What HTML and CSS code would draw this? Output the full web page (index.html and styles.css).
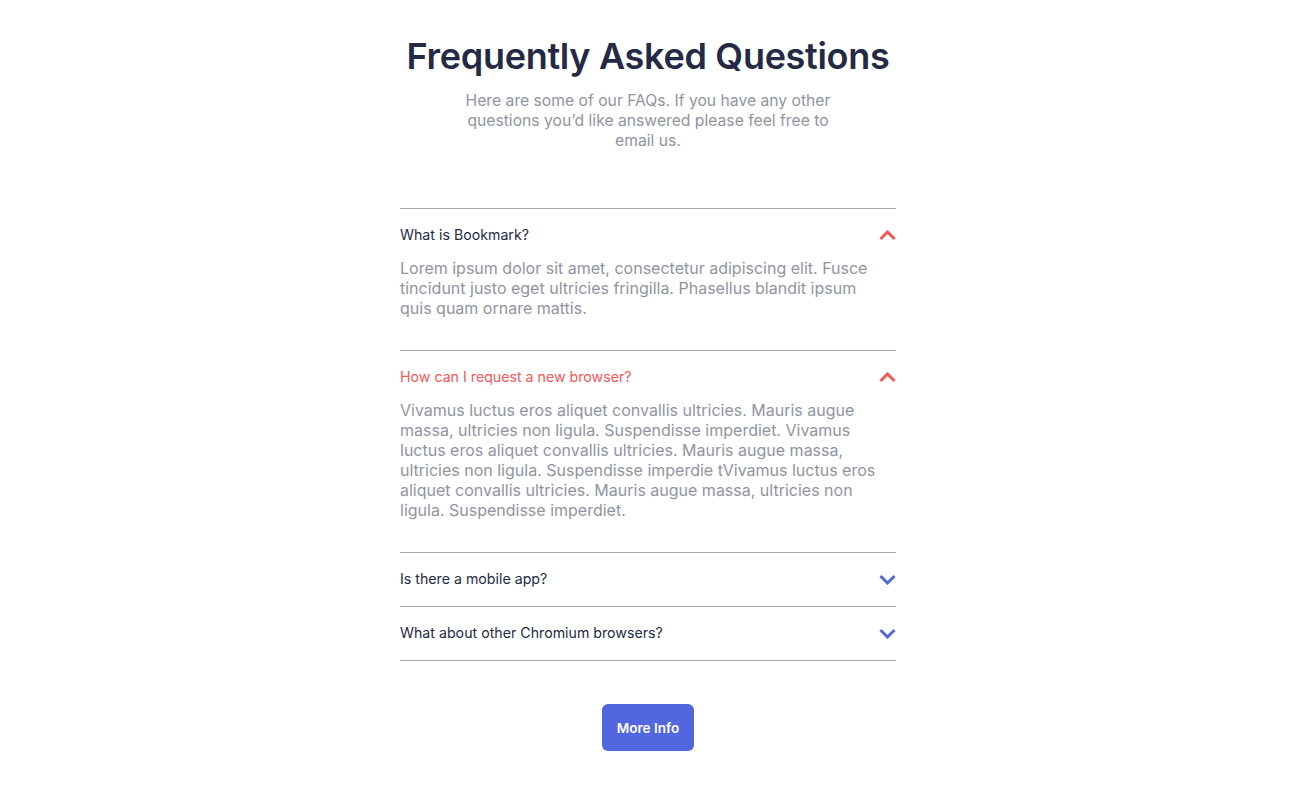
FILE: index.html
```html
<!DOCTYPE html>
<html lang="en">
<head>
<meta charset="utf-8">
<title>FAQ</title>
<link rel="stylesheet" href="styles.css">
</head>
<body>
<main class="faq">
  <h1 class="faq-title">Frequently Asked Questions</h1>
  <p class="faq-intro">Here are some of our FAQs. If you have any other questions you’d like answered please feel free to email us.</p>
  <div class="faq-list">
    <div class="faq-item open">
      <div class="faq-q"><span>What is Bookmark?</span>
        <svg class="chev up" width="17" height="11" viewBox="0 0 17 11"><path d="M1.5 9 L8.5 2 L15.5 9"/></svg>
      </div>
      <p class="faq-a">Lorem ipsum dolor sit amet, consectetur adipiscing elit. Fusce tincidunt justo eget ultricies fringilla. Phasellus blandit ipsum quis quam ornare mattis.</p>
    </div>
    <div class="faq-item open active">
      <div class="faq-q"><span>How can I request a new browser?</span>
        <svg class="chev up" width="17" height="11" viewBox="0 0 17 11"><path d="M1.5 9 L8.5 2 L15.5 9"/></svg>
      </div>
      <p class="faq-a">Vivamus luctus eros aliquet convallis ultricies. Mauris augue massa, ultricies non ligula. Suspendisse imperdiet. Vivamus luctus eros aliquet convallis ultricies. Mauris augue massa, ultricies non ligula. Suspendisse imperdie tVivamus luctus eros aliquet convallis ultricies. Mauris augue massa, ultricies non ligula. Suspendisse imperdiet.</p>
    </div>
    <div class="faq-item">
      <div class="faq-q"><span>Is there a mobile app?</span>
        <svg class="chev down" width="17" height="11" viewBox="0 0 17 11"><path d="M1.5 2 L8.5 9 L15.5 2"/></svg>
      </div>
    </div>
    <div class="faq-item">
      <div class="faq-q"><span>What about other Chromium browsers?</span>
        <svg class="chev down" width="17" height="11" viewBox="0 0 17 11"><path d="M1.5 2 L8.5 9 L15.5 2"/></svg>
      </div>
    </div>
  </div>
  <button class="more-btn" type="button">More Info</button>
</main>
</body>
</html>
```

FILE: styles.css
```css
* { box-sizing: border-box; }
html, body { margin: 0; padding: 0; background: #fff; }
body {
  font-family: Inter, "Open Sans", "Liberation Sans", sans-serif;
  color: #242a45;
}
.faq {
  display: flex;
  flex-direction: column;
  align-items: center;
  padding-top: 34px;
}
.faq-title {
  margin: 0;
  font-size: 36px;
  line-height: 44px;
  font-weight: 600;
  color: #242a45;
  letter-spacing: -0.3px;
}
.faq-intro {
  margin: 13px 0 0;
  width: 380px;
  text-align: center;
  font-size: 15.7px;
  line-height: 20px;
  color: #9194a1;
}
.faq-list {
  width: 496px;
  margin-top: 57px;
  border-bottom: 1px solid #aaabb2;
}
.faq-item {
  border-top: 1px solid #aaabb2;
}
.faq-q {
  display: flex;
  justify-content: space-between;
  align-items: center;
  padding: 16px 0 17px;
  font-size: 14.2px;
  line-height: 20px;
  color: #242a45;
}
.active .faq-q { color: #fa5757; }
.chev { fill: none; stroke-width: 3; stroke-linecap: butt; stroke-linejoin: miter; }
.chev.up { stroke: #fa5757; }
.chev.down { stroke: #5267df; }
.faq-a {
  margin: -4px 0 0;
  padding: 0 20px 32px 0;
  font-size: 16px;
  line-height: 20px;
  color: #9194a1;
}
.more-btn {
  margin-top: 43px;
  width: 92px;
  height: 47px;
  border: 0;
  border-radius: 6px;
  background: #5267df;
  color: #fff;
  font-family: inherit;
  font-size: 13.5px;
  font-weight: 600;
  cursor: pointer;
}
```
